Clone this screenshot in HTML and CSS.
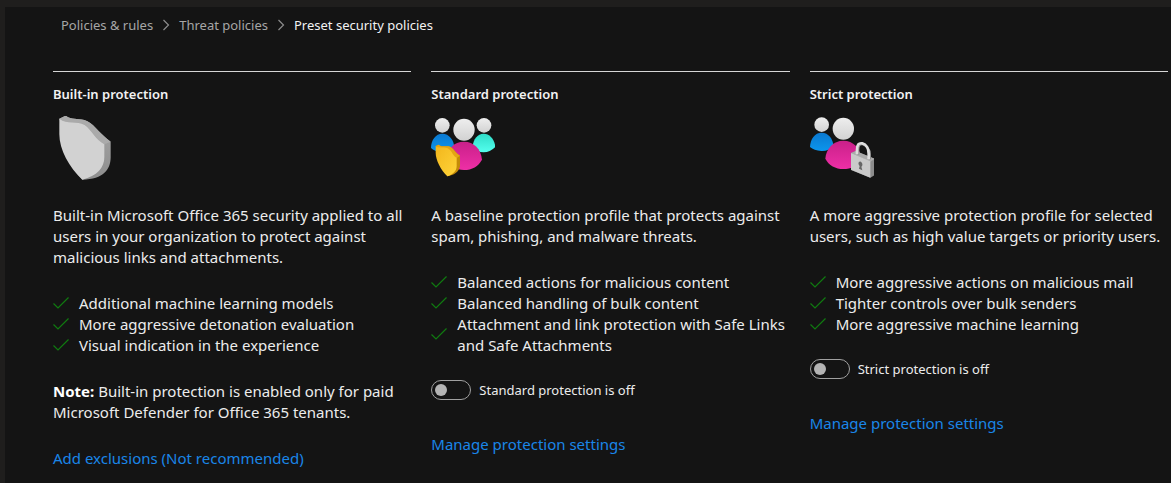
FILE: index.html
```html
<!DOCTYPE html>
<html lang="en">
<head>
<meta charset="utf-8">
<meta name="viewport" content="width=device-width, initial-scale=1">
<title>Preset security policies</title>
<link rel="stylesheet" href="styles.css">
</head>
<body>
<svg class="defs" width="0" height="0" aria-hidden="true">
  <defs>
    <symbol id="check" viewBox="0 0 16 14"><path d="M0.5 6.5 5 11 15.5 0.5" fill="none" stroke="currentColor" stroke-width="1.2"/></symbol>
    <symbol id="chevron" viewBox="0 0 8 12"><path d="M1.5 1 6.5 6 1.5 11" fill="none" stroke="currentColor" stroke-width="1.2"/></symbol>
    <linearGradient id="head" x1="0" y1="0" x2="0" y2="1"><stop offset="0" stop-color="#eeeeee"/><stop offset="1" stop-color="#d2d2d2"/></linearGradient>
    <linearGradient id="blue" x1="0" y1="0" x2="0" y2="1"><stop offset="0" stop-color="#0a78d0"/><stop offset="1" stop-color="#0c96ec"/></linearGradient>
    <linearGradient id="pink" x1="0" y1="0" x2="0" y2="1"><stop offset="0" stop-color="#c92089"/><stop offset="1" stop-color="#ee2fa6"/></linearGradient>
    <linearGradient id="teal" x1="0" y1="0" x2="0" y2="1"><stop offset="0" stop-color="#2fdcc8"/><stop offset="1" stop-color="#54ffee"/></linearGradient>
    <linearGradient id="gold" x1="0" y1="0" x2="1" y2="1"><stop offset="0" stop-color="#f2b61c"/><stop offset="1" stop-color="#ffd43a"/></linearGradient>
    <linearGradient id="edge" x1="0" y1="0" x2="0" y2="1"><stop offset="0" stop-color="#a6a6a6"/><stop offset="1" stop-color="#8e8e8e"/></linearGradient>
  </defs>
</svg>
<main class="panel">
  <nav class="breadcrumb" aria-label="Breadcrumb">
    <a href="#rules">Policies &amp; rules</a>
    <svg class="chevron" aria-hidden="true"><use href="#chevron"/></svg>
    <a href="#threat">Threat policies</a>
    <svg class="chevron" aria-hidden="true"><use href="#chevron"/></svg>
    <a class="current" href="#preset" aria-current="page">Preset security policies</a>
  </nav>

  <div class="policies">
    <section class="policy">
      <h2 class="title">Built-in protection</h2>
      <svg class="art" viewBox="24 33 192 192" aria-hidden="true">
        <path d="M43 41 62 32C78 44 96 41 118 45C143 51 160 83 197 110V158C196 192 177 222 112 224L100 210Z" fill="url(#edge)"/>
        <path d="M43 41 62 32C78 44 96 41 118 45C143 51 160 83 197 110L178 118C155 108 140 75 121 60C100 46 67 60 43 41Z" fill="#aaaaaa"/>
        <path d="M43 41C67 60 96 46 119 60C140 75 151 104 178 118V157C178 188 156 213 112 224C72 187 43 134 43 88Z" fill="#d2d2d2"/>
      </svg>
      <p class="text">Built-in Microsoft Office 365 security applied to all users in your organization to protect against malicious links and attachments.</p>
      <ul class="features">
        <li><svg class="check" aria-hidden="true"><use href="#check"/></svg><span>Additional machine learning models</span></li>
        <li><svg class="check" aria-hidden="true"><use href="#check"/></svg><span>More aggressive detonation evaluation</span></li>
        <li><svg class="check" aria-hidden="true"><use href="#check"/></svg><span>Visual indication in the experience</span></li>
      </ul>
      <p class="text note"><strong>Note:</strong> Built-in protection is enabled only for paid Microsoft Defender for Office 365 tenants.</p>
      <a class="action" href="#exclusions">Add exclusions (Not recommended)</a>
    </section>

    <section class="policy">
      <h2 class="title">Standard protection</h2>
      <svg class="art" viewBox="20 33 192 192" aria-hidden="true">
        <circle cx="54" cy="61" r="22" fill="url(#head)"/>
        <circle cx="179" cy="61" r="22" fill="url(#head)"/>
        <path d="M20 129C20 105 34 86 54 86S90 105 90 129Q72 143 52 141Q30 139 20 129Z" fill="url(#blue)"/>
        <path d="M145 124C147 103 159 86 178 86S211 104 213 126Q198 142 178 142Q157 142 145 124Z" fill="url(#teal)"/>
        <ellipse cx="119" cy="74" rx="32" ry="33" fill="url(#head)"/>
        <path d="M66 162C68 132 89 110 119 110S170 132 173 164C162 184 143 195 119 195S76 184 66 162Z" fill="url(#pink)"/>
        <path d="M34 123 43 119C55 128 68 121 79 126C90 133 95 146 107 152V184C104 201 88 211 69 214Z" fill="#c48b08"/>
        <path d="M34 123 43 119C55 128 68 121 79 126C90 133 95 146 107 152L96 160Z" fill="#e3a514"/>
        <path d="M34 123C47 132 60 124 72 131C83 137 86 153 97 158V183C97 199 84 209 69 214C49 194 34 165 34 143Z" fill="url(#gold)"/>
      </svg>
      <p class="text">A baseline protection profile that protects against spam, phishing, and malware threats.</p>
      <ul class="features">
        <li><svg class="check" aria-hidden="true"><use href="#check"/></svg><span>Balanced actions for malicious content</span></li>
        <li><svg class="check" aria-hidden="true"><use href="#check"/></svg><span>Balanced handling of bulk content</span></li>
        <li><svg class="check" aria-hidden="true"><use href="#check"/></svg><span>Attachment and link protection with Safe Links and Safe Attachments</span></li>
      </ul>
      <div class="toggle">
        <input type="checkbox" role="switch" id="standard">
        <label for="standard">Standard protection is off</label>
      </div>
      <a class="action" href="#manage-standard">Manage protection settings</a>
    </section>

    <section class="policy">
      <h2 class="title">Strict protection</h2>
      <svg class="art" viewBox="15 33 192 192" aria-hidden="true">
        <circle cx="50" cy="59" r="22" fill="url(#head)"/>
        <path d="M15 126C16 102 29 83 50 83S84 102 86 124Q70 139 49 138Q27 137 15 126Z" fill="url(#blue)"/>
        <ellipse cx="115" cy="71" rx="32" ry="33" fill="url(#head)"/>
        <path d="M61 161C63 131 85 107 115 107S166 129 169 161C158 182 138 192 115 192S71 181 61 161Z" fill="url(#pink)"/>
        <path d="M138 144 152 138 209 161V210L196 218 138 195Z" fill="#8c8c8c"/>
        <path d="M138 144 152 138 209 161 196 170Z" fill="#aaaaaa"/>
        <path d="M138 144 196 169V218L138 194Z" fill="#cacaca"/>
        <path d="M160 149V135C160 121 165 116 173 118C184 121 195 133 195 147V163" fill="none" stroke="#8d8d8d" stroke-width="6"/>
        <path d="M156 148V135C156 119 161 113 172 115C184 118 191 131 191 146V163" fill="none" stroke="#dedede" stroke-width="8"/>
        <path d="M167 170C160 168 158 178 164 183L162 191 172 196 169 185C175 181 172 172 167 170Z" fill="#666666"/>
      </svg>
      <p class="text">A more aggressive protection profile for selected users, such as high value targets or priority users.</p>
      <ul class="features">
        <li><svg class="check" aria-hidden="true"><use href="#check"/></svg><span>More aggressive actions on malicious mail</span></li>
        <li><svg class="check" aria-hidden="true"><use href="#check"/></svg><span>Tighter controls over bulk senders</span></li>
        <li><svg class="check" aria-hidden="true"><use href="#check"/></svg><span>More aggressive machine learning</span></li>
      </ul>
      <div class="toggle">
        <input type="checkbox" role="switch" id="strict">
        <label for="strict">Strict protection is off</label>
      </div>
      <a class="action" href="#manage-strict">Manage protection settings</a>
    </section>
  </div>
</main>
</body>
</html>
```

FILE: styles.css
```css
* {
  box-sizing: border-box;
}

body {
  margin: 0;
  padding: 7px 0 0 5px;
  min-height: 100vh;
  display: flex;
  background: #1f1e1d;
  color: #ececec;
  font-family: "Segoe UI", "Noto Sans", "Open Sans", sans-serif;
  font-size: 15px;
  line-height: 21px;
}

.defs {
  position: absolute;
}

.panel {
  flex: 1;
  padding: 8px 3px 0 48px;
  background: #141414;
}

.breadcrumb {
  display: flex;
  align-items: center;
  gap: 9px;
  padding-left: 8px;
  font-size: 13px;
  line-height: 20px;
}

.breadcrumb a {
  color: #a6a6a6;
  text-decoration: none;
}

.breadcrumb .current {
  color: #f2f2f2;
}

.chevron {
  width: 8px;
  height: 12px;
  color: #8c8c8c;
}

.policies {
  display: grid;
  grid-template-columns: repeat(3, 1fr);
  gap: 20px;
  margin-top: 36px;
}

.policy {
  border-top: 1px solid #d6d6d6;
  padding-top: 12px;
}

.title {
  margin: 0 0 12px;
  font-size: 13px;
  line-height: 20px;
  font-weight: 600;
  color: #f2f2f2;
}

.art {
  display: block;
  width: 64px;
  height: 64px;
  margin-bottom: 25px;
}

.text {
  margin: 0;
}

.features {
  margin: 25px 0 24px;
  padding: 0;
  list-style: none;
}

.features li {
  display: flex;
  align-items: center;
  gap: 10px;
}

.check {
  flex: none;
  width: 16px;
  height: 14px;
  color: #107c10;
}

.note {
  margin-top: 25px;
}

.note strong {
  font-weight: 700;
  color: #ffffff;
}

.note + .action {
  margin-top: 25px;
}

.toggle {
  display: flex;
  align-items: center;
  gap: 8px;
  font-size: 13px;
  line-height: 20px;
}

.toggle input {
  appearance: none;
  display: flex;
  align-items: center;
  width: 40px;
  height: 20px;
  margin: 0;
  padding: 0 3px;
  border: 1px solid #a0a0a0;
  border-radius: 10px;
}

.toggle input::before {
  content: "";
  width: 12px;
  height: 12px;
  border-radius: 50%;
  background: #b4b4b4;
}

.toggle input:checked {
  justify-content: flex-end;
}

.toggle + .action {
  margin-top: 34px;
}

.action {
  display: block;
  width: fit-content;
  color: #1a86e8;
  text-decoration: none;
}
```
